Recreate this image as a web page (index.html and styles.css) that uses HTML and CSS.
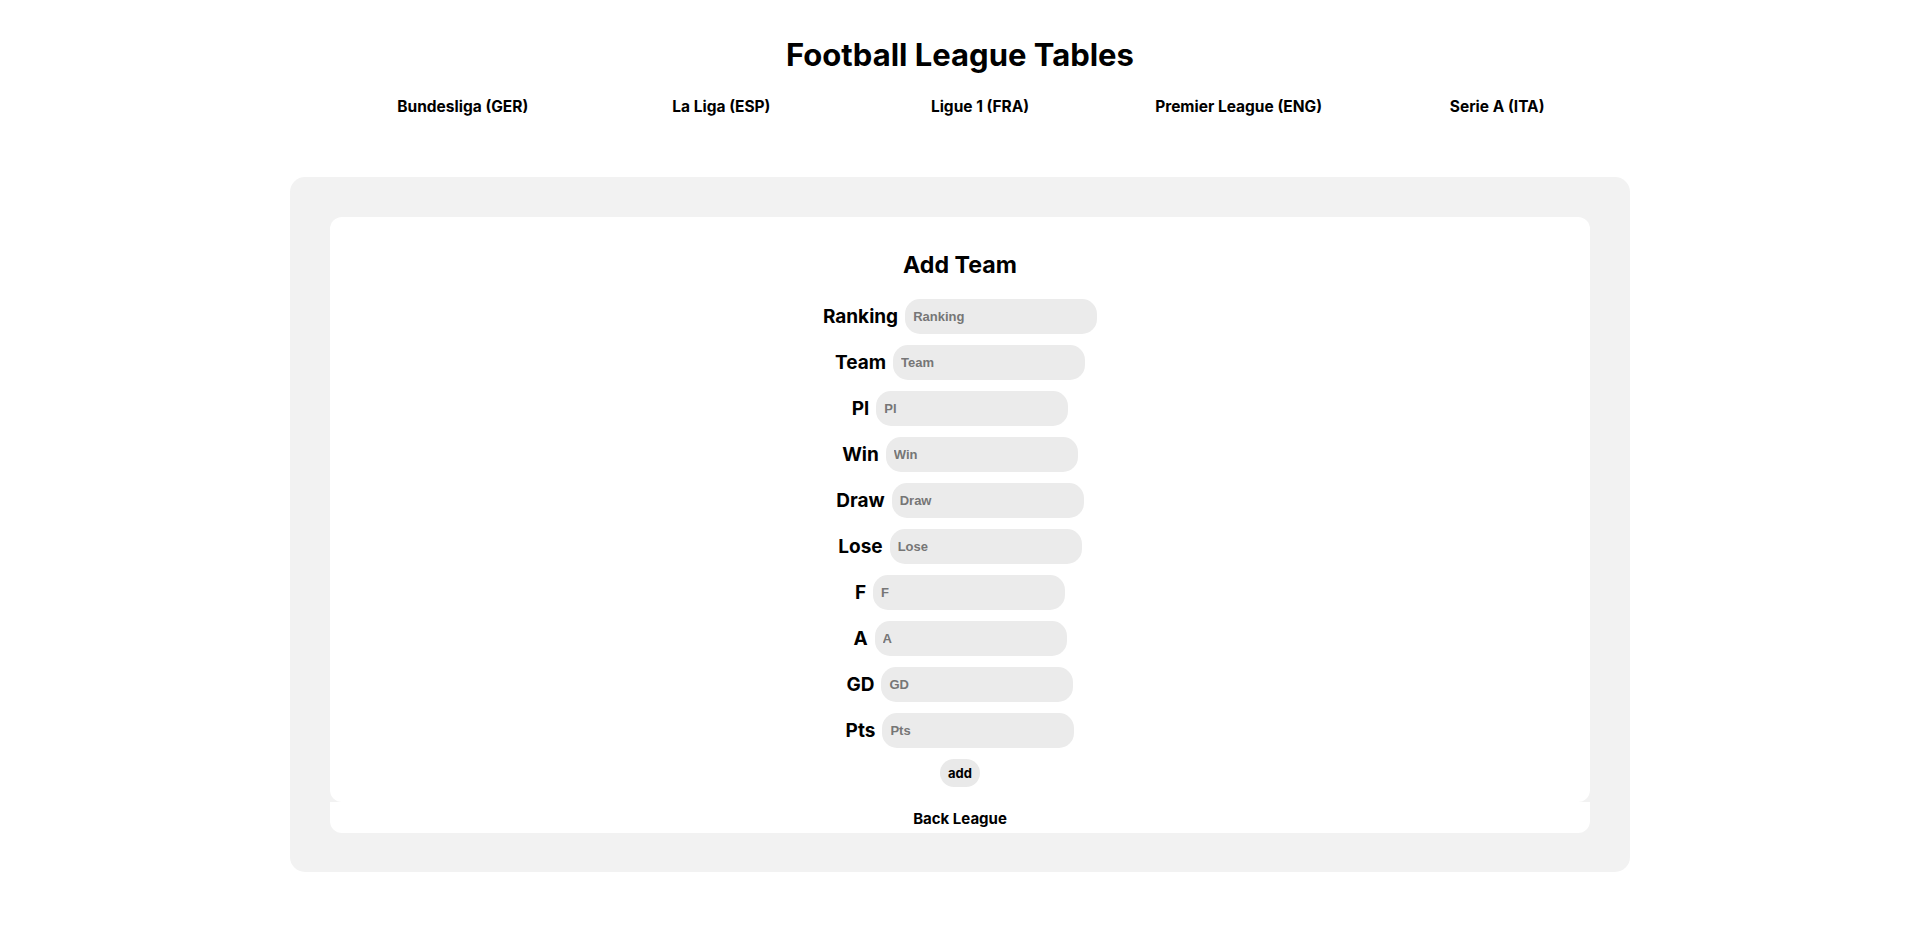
FILE: index.html
```html
<!DOCTYPE html>
<html lang="en">
<head>
<meta charset="utf-8">
<title>Football League Tables</title>
<link rel="stylesheet" href="styles.css">
</head>
<body>
<header class="header">
  <h1 class="title">Football League Tables</h1>
  <nav class="nav">
    <ul class="nav-list">
      <li class="nav-item"><a class="nav-link" href="#">Bundesliga (GER)</a></li>
      <li class="nav-item"><a class="nav-link" href="#">La Liga (ESP)</a></li>
      <li class="nav-item"><a class="nav-link" href="#">Ligue 1 (FRA)</a></li>
      <li class="nav-item"><a class="nav-link" href="#">Premier League (ENG)</a></li>
      <li class="nav-item"><a class="nav-link" href="#">Serie A (ITA)</a></li>
    </ul>
  </nav>
</header>
<main class="panel">
  <form class="card">
    <h2 class="card-title">Add Team</h2>
    <div class="field"><label class="field-label">Ranking</label><input class="field-input" placeholder="Ranking"></div>
    <div class="field"><label class="field-label">Team</label><input class="field-input" placeholder="Team"></div>
    <div class="field"><label class="field-label">Pl</label><input class="field-input" placeholder="Pl"></div>
    <div class="field"><label class="field-label">Win</label><input class="field-input" placeholder="Win"></div>
    <div class="field"><label class="field-label">Draw</label><input class="field-input" placeholder="Draw"></div>
    <div class="field"><label class="field-label">Lose</label><input class="field-input" placeholder="Lose"></div>
    <div class="field"><label class="field-label">F</label><input class="field-input" placeholder="F"></div>
    <div class="field"><label class="field-label">A</label><input class="field-input" placeholder="A"></div>
    <div class="field"><label class="field-label">GD</label><input class="field-input" placeholder="GD"></div>
    <div class="field"><label class="field-label">Pts</label><input class="field-input" placeholder="Pts"></div>
    <button class="add-btn" type="button">add</button>
  </form>
  <div class="back">Back League</div>
</main>
</body>
</html>
```
FILE: styles.css
```css
* { box-sizing: border-box; }
html, body { margin: 0; padding: 0; background: #ffffff; }
body {
  font-family: Inter, "Noto Sans CJK KR", sans-serif;
  font-weight: 700;
  color: #000000;
}
.header { text-align: center; }
.title {
  margin: 35px 0 0;
  font-size: 31px;
  line-height: 40px;
  font-weight: 700;
}
.nav {
  width: 1333px;
  margin: 22px auto 0;
  padding-left: 40px;
}
.nav-list {
  list-style: none;
  margin: 0;
  padding: 0;
  display: flex;
}
.nav-item {
  flex: 1;
  text-align: center;
  font-size: 15.5px;
  line-height: 20px;
}
.nav-link { color: #000000; text-decoration: none; }

.panel {
  width: 1340px;
  margin: 60px auto 0;
  padding: 40px 40px 39px;
  background: #f2f2f2;
  border-radius: 15px;
}
.card {
  margin: 0;
  background: #ffffff;
  border-radius: 12px;
  padding: 33px 0 15px;
  display: flex;
  flex-direction: column;
  align-items: center;
}
.card-title {
  margin: 0 0 8px;
  font-size: 23.2px;
  line-height: 30px;
  font-weight: 700;
}
.field {
  display: flex;
  align-items: center;
  justify-content: center;
  gap: 7px;
  height: 35px;
  margin-top: 11px;
}
.field-label {
  font-size: 19px;
  line-height: 24px;
  font-weight: 700;
}
.field-input {
  width: 192px;
  height: 35px;
  border: none;
  outline: none;
  border-radius: 15px;
  background: #ebebeb;
  padding: 0 8px;
  font-family: "Liberation Sans", Arial, sans-serif;
  font-size: 13px;
  font-weight: 700;
  color: #000000;
}
.field-input::placeholder { color: #767676; }
.add-btn {
  margin-top: 11px;
  height: 28px;
  padding: 0 8.5px;
  border: none;
  border-radius: 14px;
  background: #e9e9e9;
  font-family: Inter, "Noto Sans CJK KR", sans-serif;
  font-size: 13px;
  font-weight: 700;
  color: #000000;
  line-height: 28px;
}
.back {
  height: 31px;
  padding-top: 2px;
  background: #ffffff;
  border-radius: 0 0 12px 12px;
  text-align: center;
  font-size: 15px;
  line-height: 29px;
}
```
